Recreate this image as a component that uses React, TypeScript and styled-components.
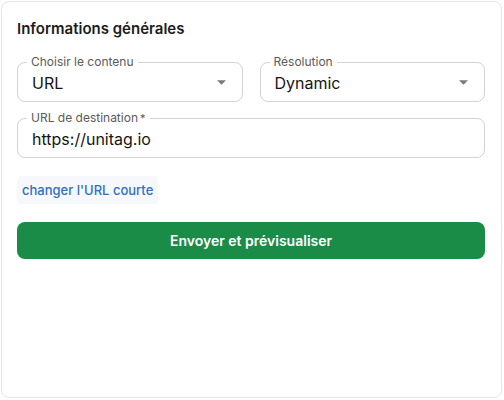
import React from "react";
import styled, { createGlobalStyle } from "styled-components";

const GlobalStyle = createGlobalStyle`
  html, body {
    margin: 0;
    padding: 0;
    background: #ffffff;
  }
  body {
    font-family: Inter, "Noto Sans", sans-serif;
    color: #1a1a1a;
  }
`;

const Page = styled.div`
  padding: 1px 2px 2px 1px;
`;

const Card = styled.section`
  box-sizing: border-box;
  height: 397px;
  border: 1px solid #e6e6e4;
  border-radius: 8px;
  background: #ffffff;
  padding: 15px 16px 16px 15px;
  display: flex;
  flex-direction: column;
`;

const Title = styled.h2`
  margin: 0;
  font-size: 15px;
  line-height: 20px;
  font-weight: 600;
  color: #1c1c1c;
  padding-top: 2px;
`;

const Form = styled.div`
  margin-top: 23px;
  display: flex;
  flex-direction: column;
  gap: 16px;
`;

const Row = styled.div`
  display: grid;
  grid-template-columns: 1fr 1fr;
  gap: 17px;
`;

const Field = styled.div`
  position: relative;
  box-sizing: border-box;
  height: 40px;
  border: 1px solid #d3d3d1;
  border-radius: 8px;
  display: flex;
  align-items: center;
  padding: 0 14px 0 14px;
`;

const Label = styled.span`
  position: absolute;
  top: -8px;
  left: 9px;
  padding: 0 4px;
  background: #ffffff;
  font-size: 12px;
  line-height: 14px;
  color: #5a5a5a;
  white-space: nowrap;
`;

const Required = styled.span`
  margin-left: 2px;
  font-size: 11px;
`;

const Value = styled.span`
  flex: 1;
  font-size: 16px;
  line-height: 20px;
  color: #151515;
  padding-top: 1px;
`;

const Caret = styled.svg`
  width: 9px;
  height: 5px;
  margin-right: 2px;
  margin-top: 1px;
  fill: #7a7a7a;
`;

const LinkButton = styled.button`
  align-self: flex-start;
  margin-top: 2px;
  border: none;
  border-radius: 4px;
  background: #f6f8fc;
  height: 28px;
  padding: 0 5px;
  font-family: inherit;
  font-size: 13px;
  font-weight: 500;
  color: #2f6fc3;
  cursor: pointer;
`;

const SubmitButton = styled.button`
  height: 37px;
  margin-top: 2px;
  border: none;
  border-radius: 8px;
  background: #1a8c48;
  color: #ffffff;
  font-family: inherit;
  font-size: 14px;
  font-weight: 600;
  cursor: pointer;
`;

const SelectField: React.FC<{ label: string; value: string }> = ({ label, value }) => (
  <Field>
    <Label>{label}</Label>
    <Value>{value}</Value>
    <Caret viewBox="0 0 10 5">
      <path d="M0 0l5 5 5-5z" />
    </Caret>
  </Field>
);

const App: React.FC = () => {
  return (
    <Page>
      <GlobalStyle />
      <Card>
        <Title>Informations générales</Title>
        <Form>
          <Row>
            <SelectField label="Choisir le contenu" value="URL" />
            <SelectField label="Résolution" value="Dynamic" />
          </Row>
          <Field>
            <Label>
              URL de destination<Required>*</Required>
            </Label>
            <Value>https://unitag.io</Value>
          </Field>
          <LinkButton>changer l'URL courte</LinkButton>
          <SubmitButton>Envoyer et prévisualiser</SubmitButton>
        </Form>
      </Card>
    </Page>
  );
};

export default App;
